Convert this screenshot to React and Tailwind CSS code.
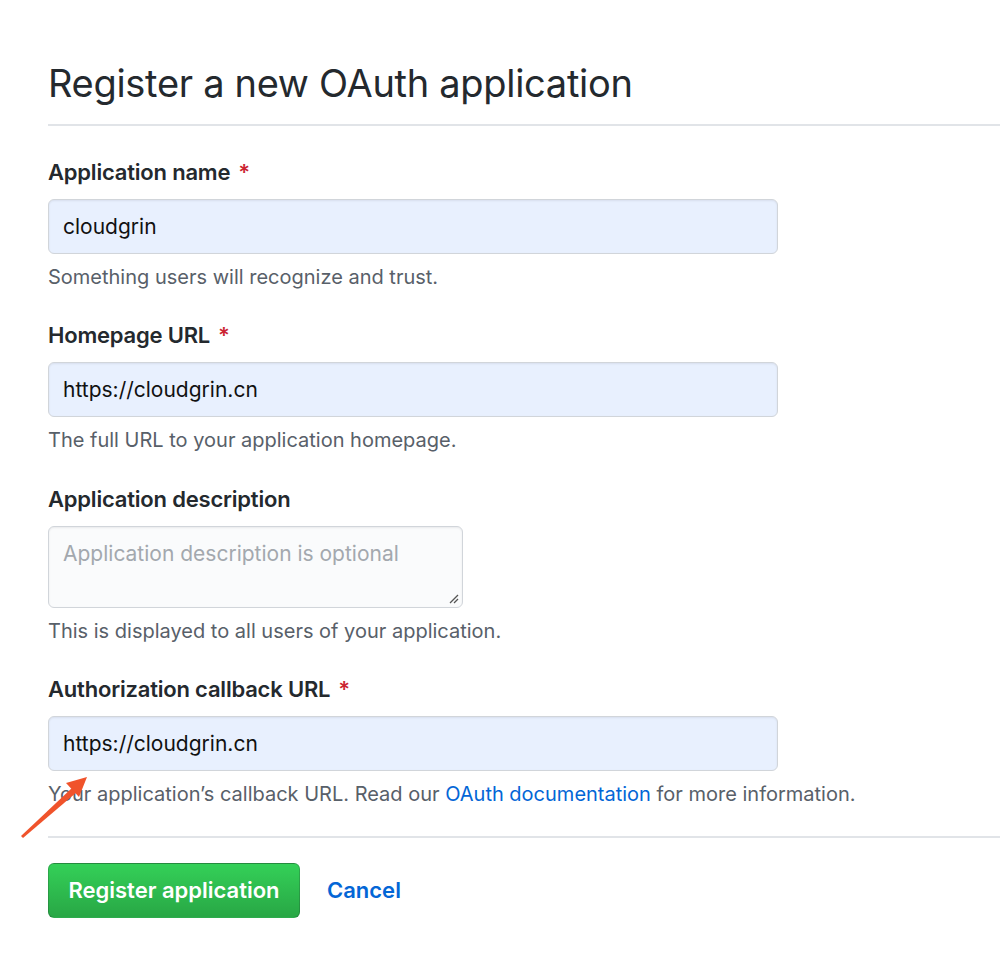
import React from "react";

const font = { fontFamily: "Inter, 'Noto Sans', Roboto, sans-serif" };

function Label({ children, required }) {
  return (
    <div className="h-[28px] flex items-center text-[22px] font-semibold text-[#24292e] tracking-[-0.2px]">
      {children}
      {required && <span className="ml-[8px] text-[#cb2431]">*</span>}
    </div>
  );
}

function Input({ value }) {
  return (
    <div className="mt-[13px] w-[730px] h-[55px] rounded-[6px] border border-[#d1d5da] bg-[#e8f0fe] flex items-center px-[14px] text-[21px] text-[#111] shadow-[inset_0_1px_2px_rgba(27,31,35,0.075)]">
      {value}
    </div>
  );
}

function Help({ children }) {
  return (
    <div className="mt-[9px] h-[28px] flex items-center text-[20px] text-[#586069]">
      {children}
    </div>
  );
}

export default function App() {
  return (
    <div className="relative w-[1000px] h-[978px] bg-white overflow-hidden" style={font}>
      <div className="pl-[48px] pt-[58px]">
        <h1 className="h-[50px] flex items-center text-[38px] font-normal text-[#24292e] tracking-[-0.3px]">
          Register a new OAuth application
        </h1>
        <div className="mt-[16px] h-[2px] bg-[#e1e4e8]" />

        <div className="mt-[32px]">
          <Label required>Application name</Label>
          <Input value="cloudgrin" />
          <Help>Something users will recognize and trust.</Help>
        </div>

        <div className="mt-[30px]">
          <Label required>Homepage URL</Label>
          <Input value="https://cloudgrin.cn" />
          <Help>The full URL to your application homepage.</Help>
        </div>

        <div className="mt-[31px]">
          <Label>Application description</Label>
          <div className="relative mt-[13px] w-[415px] h-[82px] rounded-[6px] border border-[#d1d5da] bg-[#fafbfc] px-[14px] pt-[14px] text-[21px] text-[#a3a8ae] shadow-[inset_0_1px_2px_rgba(27,31,35,0.075)]">
            <div className="leading-[26px]">Application description is optional</div>
            <svg className="absolute right-[3px] bottom-[3px]" width="10" height="10" viewBox="0 0 10 10">
              <line x1="1" y1="9" x2="9" y2="1" stroke="#555" strokeWidth="1.2" />
              <line x1="5" y1="9" x2="9" y2="5" stroke="#555" strokeWidth="1.2" />
            </svg>
          </div>
          <Help>This is displayed to all users of your application.</Help>
        </div>

        <div className="mt-[30px]">
          <Label required>Authorization callback URL</Label>
          <Input value="https://cloudgrin.cn" />
          <Help>
            Your application’s callback URL. Read our&nbsp;
            <span className="text-[#0366d6]">OAuth documentation</span>&nbsp;for more information.
          </Help>
        </div>

        <div className="mt-[28px] h-[2px] bg-[#e1e4e8]" />

        <div className="mt-[25px] flex items-center">
          <div className="w-[252px] h-[55px] rounded-[6px] border border-[rgba(27,31,35,0.2)] bg-gradient-to-b from-[#34d058] to-[#28a745] flex items-center justify-center text-white text-[22px] font-semibold">
            Register application
          </div>
          <div className="ml-[27px] text-[#0366d6] text-[22px] font-semibold">Cancel</div>
        </div>
      </div>

      <svg className="absolute left-0 top-0 pointer-events-none" width="1000" height="978">
        <polygon points="21,836 23,838 77,792 73,787" fill="#f0532b" />
        <polygon points="87,777 66,783 79,797" fill="#f0532b" />
      </svg>
    </div>
  );
}
